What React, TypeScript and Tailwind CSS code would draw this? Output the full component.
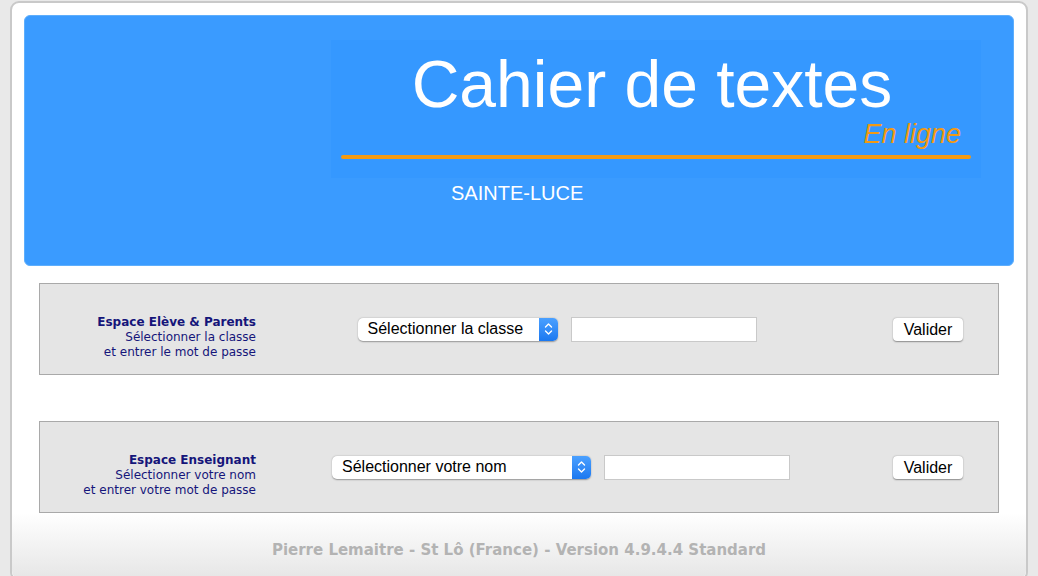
import React from 'react';

function Stepper() {
  return (
    <div className="flex h-full w-[19px] items-center justify-center rounded-r-[5px] bg-gradient-to-b from-[#4aa0ff] to-[#1a78f0]">
      <svg width="9" height="14" viewBox="0 0 9 14" fill="none" stroke="white" strokeWidth="1.4" strokeLinecap="round" strokeLinejoin="round">
        <path d="M1.5 5 L4.5 2 L7.5 5" />
        <path d="M1.5 9 L4.5 12 L7.5 9" />
      </svg>
    </div>
  );
}

interface LoginRowProps {
  title: string;
  line1: string;
  line2: string;
  placeholder: string;
  selectWidth: string;
  shift?: string;
}

function LoginRow({ title, line1, line2, placeholder, selectWidth, shift = '' }: LoginRowProps) {
  return (
    <div className="mx-[27px] flex h-[92px] items-center border border-[#a9a9a9] bg-[#e5e5e5]">
      <div className="mt-[17px] w-[216px] text-right font-['DejaVu_Sans',sans-serif] text-[12px] leading-[15px] text-[#15157a]">
        <div className="font-bold">{title}</div>
        <div>{line1}</div>
        <div>{line2}</div>
      </div>
      <div className={`flex flex-1 items-center justify-center gap-[13px] ${shift}`}>
        <div className={`flex h-[23px] ${selectWidth} items-stretch rounded-[5px] bg-white shadow-[0_0.5px_1.5px_rgba(0,0,0,0.35)]`}>
          <div className="flex flex-1 items-center pl-[10px] font-['Liberation_Sans',sans-serif] text-[16px] text-black">
            {placeholder}
          </div>
          <Stepper />
        </div>
        <div className="h-[25px] w-[186px] border border-[#c9c9c9] bg-white" />
      </div>
      <div className="flex w-[140px] justify-center">
        <button className="h-[23px] w-[70px] rounded-[4px] bg-white font-['Liberation_Sans',sans-serif] text-[16px] text-black shadow-[0_0.5px_1.5px_rgba(0,0,0,0.4)]">
          Valider
        </button>
      </div>
    </div>
  );
}

export default function App() {
  return (
    <div className="h-[576px] w-[1038px] overflow-hidden bg-[#e9e9e9] pl-[10px] pt-[1px]">
      <div className="flex h-[580px] w-[1018px] flex-col rounded-[9px] border-2 border-[#c9c9c9] bg-white">
        {/* header */}
        <div className="mx-[12px] mt-[12px] h-[251px] rounded-[6px] border border-[#5eaefc] bg-[#3a9bff]">
          <div className="ml-[306px] mt-[24px] flex h-[138px] w-[650px] flex-col bg-[#3598ff] px-[10px]">
            <div className="mt-[9px] pr-[8px] text-center font-['Liberation_Sans',sans-serif] text-[66px] leading-[70px] text-white">
              Cahier de textes
            </div>
            <div className="pr-[10px] text-right font-['Liberation_Sans',sans-serif] text-[27px] italic leading-[30px] text-[#f39a12]">
              En ligne
            </div>
            <div className="mt-[6px] h-[4px] rounded-full bg-[#f39a12]" />
          </div>
          <div className="pl-[426px] font-['Liberation_Sans',sans-serif] text-[20px] text-white">
            SAINTE-LUCE
          </div>
        </div>
        {/* login rows */}
        <div className="mt-[17px] flex flex-col gap-[46px]">
          <LoginRow
            title="Espace Elève & Parents"
            line1="Sélectionner la classe"
            line2="et entrer le mot de passe"
            placeholder="Sélectionner la classe"
            selectWidth="w-[200px]"
          />
          <LoginRow
            title="Espace Enseignant"
            line1="Sélectionner votre nom"
            line2="et entrer votre mot de passe"
            placeholder="Sélectionner votre nom"
            selectWidth="w-[259px]"
            shift="pl-[8px]"
          />
        </div>
        {/* footer */}
        <div className="flex flex-1 justify-center rounded-b-[8px] bg-gradient-to-b from-white to-[#e6e6e6] pt-[26px]">
          <div className="font-['DejaVu_Sans',sans-serif] text-[15px] font-bold text-[#b3b3b3]">
            Pierre Lemaitre - St Lô (France) - Version 4.9.4.4 Standard
          </div>
        </div>
      </div>
    </div>
  );
}
